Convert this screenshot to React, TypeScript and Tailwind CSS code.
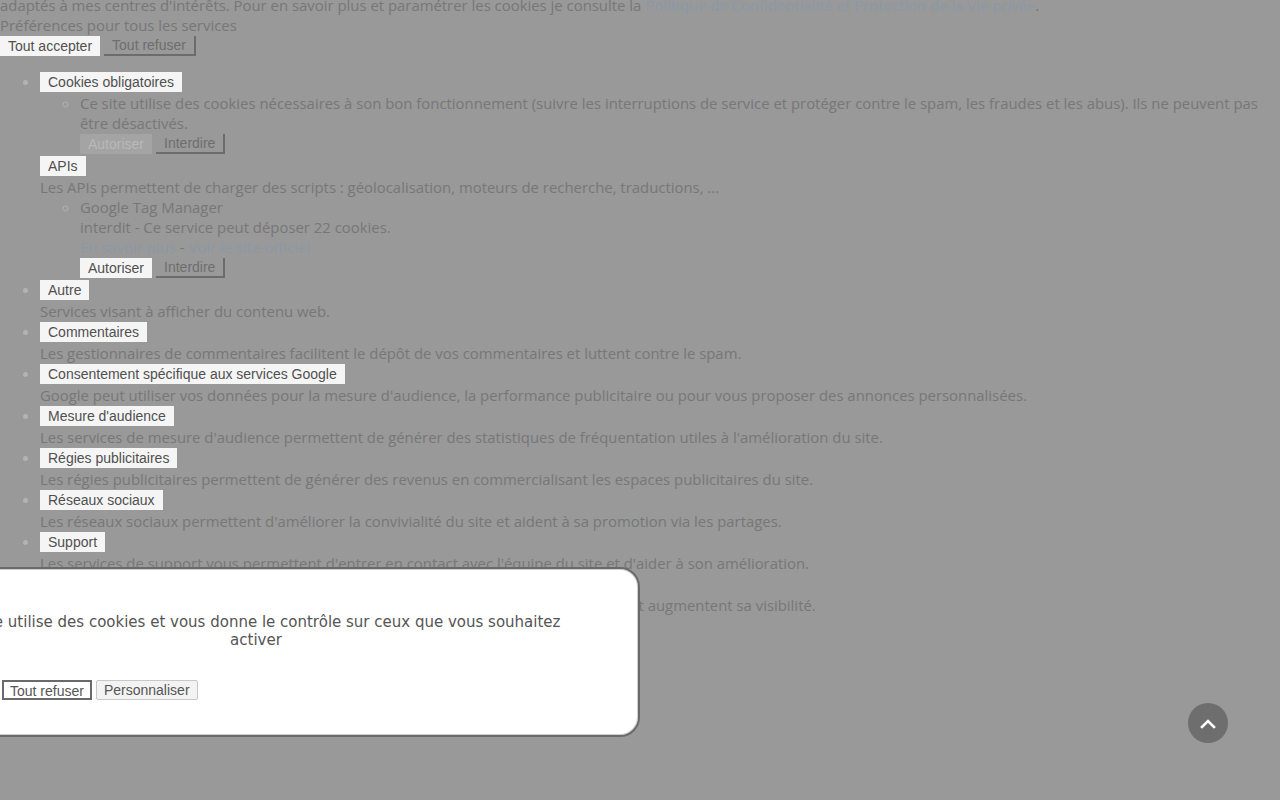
import React from "react";

const btnFont = "font-['Liberation_Sans',Arial,sans-serif] text-[14px] leading-[18px]";

function Solid({ children }: { children: React.ReactNode }) {
  return (
    <button className={`${btnFont} h-5 bg-[#f5f5f5] px-[8px] text-[#505050]`}>{children}</button>
  );
}

function Sunken({ children }: { children: React.ReactNode }) {
  return (
    <button
      className={`${btnFont} h-5 border-b-2 border-r-2 border-[#6c6c6c] bg-transparent px-[8px] text-[#6e6e6e]`}
    >
      {children}
    </button>
  );
}

function Faded({ children }: { children: React.ReactNode }) {
  return (
    <button className={`${btnFont} h-5 bg-[#a4a4a4] px-[8px] text-[#b9b9b9]`}>{children}</button>
  );
}

type Cat = { title: string; desc: string };

const cats: Cat[] = [
  { title: "Autre", desc: "Services visant à afficher du contenu web." },
  {
    title: "Commentaires",
    desc: "Les gestionnaires de commentaires facilitent le dépôt de vos commentaires et luttent contre le spam.",
  },
  {
    title: "Consentement spécifique aux services Google",
    desc: "Google peut utiliser vos données pour la mesure d'audience, la performance publicitaire ou pour vous proposer des annonces personnalisées.",
  },
  {
    title: "Mesure d'audience",
    desc: "Les services de mesure d'audience permettent de générer des statistiques de fréquentation utiles à l'amélioration du site.",
  },
  {
    title: "Régies publicitaires",
    desc: "Les régies publicitaires permettent de générer des revenus en commercialisant les espaces publicitaires du site.",
  },
  {
    title: "Réseaux sociaux",
    desc: "Les réseaux sociaux permettent d'améliorer la convivialité du site et aident à sa promotion via les partages.",
  },
  {
    title: "Support",
    desc: "Les services de support vous permettent d'entrer en contact avec l'équipe du site et d'aider à son amélioration.",
  },
  {
    title: "Vidéos",
    desc: "Les services de partage de vidéo permettent d'enrichir le site de contenu multimédia et augmentent sa visibilité.",
  },
];

export default function App() {
  return (
    <div className="relative h-[800px] w-[1280px] overflow-hidden bg-[#999999]">
      <div className="-mt-[5px] font-['Open_Sans',sans-serif] text-[14.9px] leading-5 text-[#777777]">
        <p className="whitespace-nowrap">
          adaptés à mes centres d'intérêts. Pour en savoir plus et paramétrer les cookies je consulte la{" "}
          <a className="text-[#8b98a6]">Politique de Confidentialité et Protection de la Vie privée</a>.
        </p>
        <p>Préférences pour tous les services</p>
        <div className="flex gap-[4px] py-px">
          <Solid>Tout accepter</Solid>
          <Sunken>Tout refuser</Sunken>
        </div>

        <ul className="mt-[14px] list-disc pl-10 marker:text-[#b3b3b3]">
          <li>
            <div className="flex py-px">
              <Solid>Cookies obligatoires</Solid>
            </div>
            <ul className="list-[circle] pl-10">
              <li>
                <p className="whitespace-nowrap">
                  Ce site utilise des cookies nécessaires à son bon fonctionnement (suivre les interruptions de service et
                  protéger contre le spam, les fraudes et les abus). Ils ne peuvent pas
                  <br />
                  être désactivés.
                </p>
                <div className="flex gap-[4px] py-px">
                  <Faded>Autoriser</Faded>
                  <Sunken>Interdire</Sunken>
                </div>
              </li>
            </ul>
          </li>
          <li className="list-none">
            <div className="flex py-px">
              <Solid>APIs</Solid>
            </div>
            <p>Les APIs permettent de charger des scripts : géolocalisation, moteurs de recherche, traductions, ...</p>
            <ul className="list-[circle] pl-10">
              <li>
                <p>Google Tag Manager</p>
                <p>interdit - Ce service peut déposer 22 cookies.</p>
                <p>
                  <a className="text-[#8b98a6]">En savoir plus</a> -{" "}
                  <a className="text-[#8b98a6]">Voir le site officiel</a>
                </p>
                <div className="flex gap-[4px] py-px">
                  <Solid>Autoriser</Solid>
                  <Sunken>Interdire</Sunken>
                </div>
              </li>
            </ul>
          </li>
          {cats.map((c) => (
            <li key={c.title}>
              <div className="flex py-px">
                <Solid>{c.title}</Solid>
              </div>
              <p>{c.desc}</p>
            </li>
          ))}
        </ul>
      </div>

      {/* cookie consent banner */}
      <div className="absolute left-[-128px] top-[567px] h-[170px] w-[768px] rounded-[20px] border-2 border-[#6a6a6a] bg-white shadow-[inset_0_0_0_1px_#cfcfcf]">
        <p className="mx-auto mt-[44px] w-[640px] text-center font-['DejaVu_Sans',sans-serif] text-[15px] leading-[18px] text-[#555555]">
          Ce site utilise des cookies et vous donne le contrôle sur ceux que vous souhaitez activer
        </p>
        <div className="mt-[31px] flex gap-[4px] pl-[24px]">
          <button className={`${btnFont} h-5 w-[100px] bg-[#f0f0f0] text-[#505050]`}>Tout accepter</button>
          <button className={`${btnFont} h-5 border-2 border-[#6a6a6a] bg-white px-[6px] text-[#555555]`}>
            Tout refuser
          </button>
          <button
            className={`${btnFont} h-5 rounded-[2px] border border-[#c8c8c8] bg-[#f3f3f3] px-[7px] text-[#555555]`}
          >
            Personnaliser
          </button>
        </div>
      </div>

      {/* back to top */}
      <button className="absolute left-[1188px] top-[703px] flex h-10 w-10 items-center justify-center rounded-full bg-[#6e6e6e]">
        <svg width="16" height="11" viewBox="0 0 16 11" fill="none">
          <path d="M2 9 L8 3 L14 9" stroke="white" strokeWidth="2.6" strokeLinecap="square" />
        </svg>
      </button>
    </div>
  );
}
